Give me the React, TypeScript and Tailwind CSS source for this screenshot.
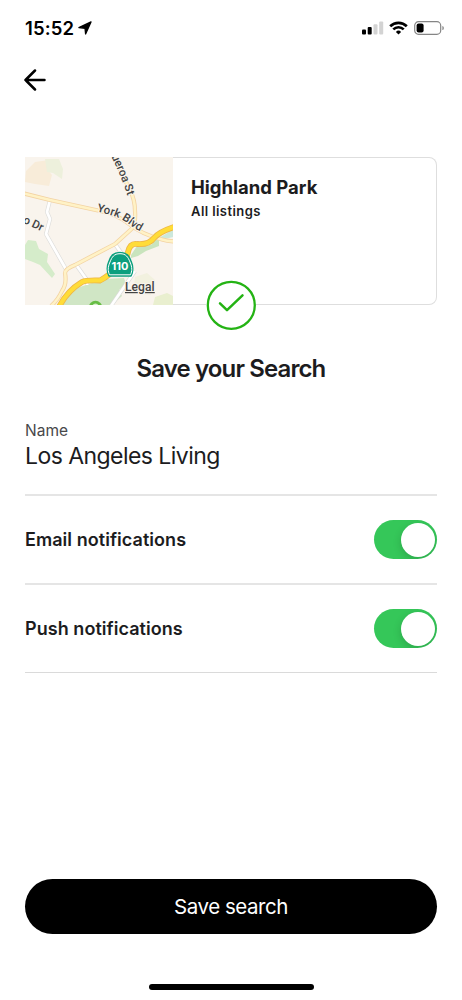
import React, { useState } from "react";

const StatusBar = () => {
  return (
    <div className="flex h-14 items-center justify-between pl-[25px] pr-[17px]">
      <div className="flex items-center gap-[3.5px] text-black">
        <span className="text-[18.5px] font-semibold leading-none tracking-[0.1px]">15:52</span>
        <svg width="14" height="14" viewBox="0 0 14 14">
          <path d="M13 .9 7.6 13 7 7.3.9 6.6Z" fill="black" stroke="black" strokeWidth="1.3" strokeLinejoin="round" />
        </svg>
      </div>
      <div className="flex items-center">
        <svg width="22" height="14" viewBox="0 0 22 14">
          <rect x="0" y="8.5" width="4" height="5" rx="1" fill="black" />
          <rect x="5.7" y="6" width="4" height="7.5" rx="1" fill="black" />
          <rect x="11.5" y="3.3" width="4" height="10.2" rx="1" fill="#d3d3d3" />
          <rect x="17.2" y="0.6" width="4" height="12.9" rx="1" fill="#d3d3d3" />
        </svg>
        <svg className="ml-[5px]" width="19" height="14" viewBox="0 0 19 14">
          <g fill="none" stroke="black" strokeWidth="2.7">
            <path d="M1.2 5.2a11.8 11.8 0 0 1 16.6 0" />
            <path d="M4.3 8.4a7.4 7.4 0 0 1 10.4 0" />
          </g>
          <path d="M9.5 13.5 6.9 10.9a3.7 3.7 0 0 1 5.2 0Z" fill="black" />
        </svg>
        <svg className="ml-1.5" width="31" height="14" viewBox="0 0 31 14">
          <rect x="0.7" y="0.7" width="26" height="12.6" rx="3.8" fill="none" stroke="#858585" strokeWidth="1.2" />
          <rect x="2.6" y="2.6" width="7" height="8.8" rx="2" fill="black" />
          <path d="M28.4 4.9c1.9.5 1.9 3.7 0 4.2Z" fill="#858585" />
        </svg>
      </div>
    </div>
  );
};

const MapPreview = () => {
  return (
    <svg className="block shrink-0 font-['Roboto','Inter',sans-serif]" width="148" height="148" viewBox="0 0 148 148">
      <rect width="148" height="148" fill="#f9f4ed" />

      {/* Parks and land */}
      <path d="M1 14 10 5 24 3 22 12 27 18 24 29 10 27 0 25Z" fill="#f8ecd9" />
      <path d="M20 2h14l4 10-1 10-9-6-6-1Z" fill="#edf0dc" />
      <path d="M110 120l12-4 8 7-4 15-18-2Z" fill="#f2f1df" />
      <path d="M130 140l12-4 6 3v9h-20Z" fill="#e9efcf" />
      <path d="M0 88l3-5 8 1 3 8 9 5-1 8 8 12-3 4-12-13-7-3-8-3Z" fill="#d5ecca" />
      <path d="M35 148l11-15 15-5 17-6 21-1 2 6-7 6 3 6-10 9Z" fill="#d0e6c5" />
      <path d="M106 98l6-9 14-1 8-9v10l-13 5-8 5-7 2Z" fill="#c9e4bd" />
      <path d="M132 82l12-7 4-2v7l-8 2Z" fill="#cce8dc" />

      {/* Minor roads */}
      <g fill="none" strokeLinejoin="round">
        <g stroke="#dcdcda" strokeWidth="4">
          <path d="M25 43l-3 12 3 7-4 15 21 37" />
          <path d="M52 109l10 14v5M90 87l7 10M86 149l24-35" />
        </g>
        <g stroke="#fff" strokeWidth="2.8">
          <path d="M25 43l-3 12 3 7-4 15 21 37" />
          <path d="M52 109l10 14v5M90 87l7 10M86 149l24-35" />
        </g>
      </g>

      {/* Main roads */}
      <g fill="none" strokeLinejoin="round">
        <g stroke="#f3d3a3" strokeWidth="4.2">
          <path d="M-1 36.5 25 43 73 53.5Q92 57 104 67T137 82.5Q142 84 149 84.5" />
          <path d="M88-2Q97 17 105 33 110 43 110 54 111 67 106.5 72L90 87 50 108Q40 112 40 116 42 127 37 134 33 143 26 149" />
        </g>
        <g stroke="#fff2c6" strokeWidth="2.6">
          <path d="M-1 36.5 25 43 73 53.5Q92 57 104 67T137 82.5Q142 84 149 84.5" />
          <path d="M88-2Q97 17 105 33 110 43 110 54 111 67 106.5 72L90 87 50 108Q40 112 40 116 42 127 37 134 33 143 26 149" />
        </g>
      </g>

      {/* Freeway */}
      <g fill="none">
        <path d="M34 150Q42 134 57 125 61 123 75 123.5 84 119 93 109 102 103 103 95 105 86 112 87 124 88 129 81 134 75 149 70" stroke="#edb648" strokeWidth="5.8" />
        <path d="M34 150Q42 134 57 125 61 123 75 123.5 84 119 93 109 102 103 103 95 105 86 112 87 124 88 129 81 134 75 149 70" stroke="#ffdc38" strokeWidth="4.2" />
      </g>

      {/* Park pin */}
      <circle cx="70.5" cy="150.5" r="6.7" fill="#67bd45" />
      <circle cx="70.5" cy="149.5" r="3" fill="#d8efcd" />

      {/* Labels */}
      <defs>
        <path id="york" d="M71.5 54.5Q94 59 103 66.5T126 79" />
        <path id="figueroa" d="M78-19 88 3Q96 19 102.500 39" />
      </defs>
      <g fill="#444" stroke="#f9f4ed" strokeWidth="2" paintOrder="stroke" strokeLinejoin="round" fontSize="11.5" fontWeight="500">
        <text><textPath href="#york">York Blvd</textPath></text>
        <text textAnchor="end"><textPath href="#figueroa" startOffset="100%">ueroa St</textPath></text>
        <text x="-2.5" y="65.5" transform="rotate(25 -2.5 65.5)">o Dr</text>
        <text x="100" y="134" fontSize="12" letterSpacing="0.1" textDecoration="underline">Legal</text>
      </g>

      {/* Highway shield */}
      <path d="M95 95.5C102 95.5 104 99 106 104 109 111 108 115 106 119H84C82 115 81 111 84 104 86 99 88 95.5 95 95.5Z" fill="#0c9f7e" stroke="#0c9f7e" strokeWidth="1.5" strokeLinejoin="round" />
      <path d="M95 96.7C101 96.7 103 100 105 105 107.5 111 107 114 105.5 117.8H84.5C83 114 82.5 111 85 105 87 100 89 96.7 95 96.7Z" fill="#0c9f7e" stroke="#fff" strokeWidth="1" strokeLinejoin="round" />
      <text x="95" y="113.3" textAnchor="middle" fontSize="11" fontWeight="700" fill="#fff" className="font-['Inter',sans-serif]">110</text>
    </svg>
  );
};

const SearchCard = () => {
  return (
    <div className="relative mx-[25px] flex h-[148px]">
      <MapPreview />
      <div className="flex-1 rounded-r-lg border border-l-0 border-[#dedede] pl-[18px] pt-[17px] text-[#1c1c1e]">
        <h2 className="text-[18.5px] font-bold leading-6">Highland Park</h2>
        <p className="mt-[3px] text-[13px] font-semibold leading-[18px] tracking-[0.42px]">All listings</p>
      </div>
      <div className="absolute -bottom-[25px] left-[181px] size-[50px] rounded-full bg-white">
        <svg width="50" height="50" viewBox="0 0 50 50" fill="none" stroke="#24b314">
          <circle cx="25.3" cy="25.3" r="23.5" strokeWidth="2.3" />
          <path d="M14 23.3 21 30.2 36.5 15.3" strokeWidth="2.5" strokeLinecap="round" strokeLinejoin="round" />
        </svg>
      </div>
    </div>
  );
};

const Toggle = ({ label }: { label: string }) => {
  const [on, setOn] = useState(true);
  return (
    <div className="flex h-[87px] items-center justify-between">
      <span className="text-[18px] font-semibold tracking-[0.05px] text-[#1c1c1e]">{label}</span>
      <button
        role="switch"
        aria-checked={on}
        aria-label={label}
        onClick={() => setOn(!on)}
        className={`flex h-[39px] w-[63px] items-center overflow-hidden rounded-full px-[2px] ${on ? "justify-end bg-[#35c759]" : "justify-start bg-gray-200"}`}
      >
        <span className="size-[34px] rounded-full bg-white shadow-[0_3px_8px_rgba(0,0,0,0.16)]" />
      </button>
    </div>
  );
};

const App = () => {
  return (
    <div className="flex h-[1000px] w-[462px] flex-col bg-white font-['Inter','Liberation_Sans',sans-serif]">
      <StatusBar />
      <header className="flex h-[101px] items-start pl-6 pt-[13px]">
        <button aria-label="Back">
          <svg width="22" height="22" viewBox="0 0 22 22" fill="none" stroke="black" strokeWidth="2.5" strokeLinecap="round" strokeLinejoin="round">
            <path d="M20.5 11H1.5M11 1.5 1.5 11l9.5 9.5" />
          </svg>
        </button>
      </header>
      <SearchCard />
      <h1 className="mt-[48px] text-center text-[24px] font-semibold leading-8 tracking-[-0.88px] text-[#1c1c1e]">Save your Search</h1>

      <main className="px-[25px] pt-[34px]">
        <div className="flex h-[77px] flex-col border-b-2 border-[#e5e5e5]">
          <span className="pt-px text-[15.5px] leading-[21px] text-[#48484a]">Name</span>
          <span className="text-[23px] leading-[30px] tracking-[-0.55px] text-[#1c1c1e]">Los Angeles Living</span>
        </div>
        <div className="border-b-2 border-[#e5e5e5]">
          <Toggle label="Email notifications" />
        </div>
        <div className="border-b border-[#dadada]">
          <Toggle label="Push notifications" />
        </div>
      </main>

      <footer className="mt-auto flex flex-col items-center px-[25px] pb-[10px]">
        <button className="h-[55px] w-full rounded-full bg-black pt-0.5 text-[20.5px] tracking-[-0.45px] text-white">Save search</button>
        <div className="mt-[50px] h-[6px] w-[165px] rounded-full bg-black" />
      </footer>
    </div>
  );
};

export default App;
